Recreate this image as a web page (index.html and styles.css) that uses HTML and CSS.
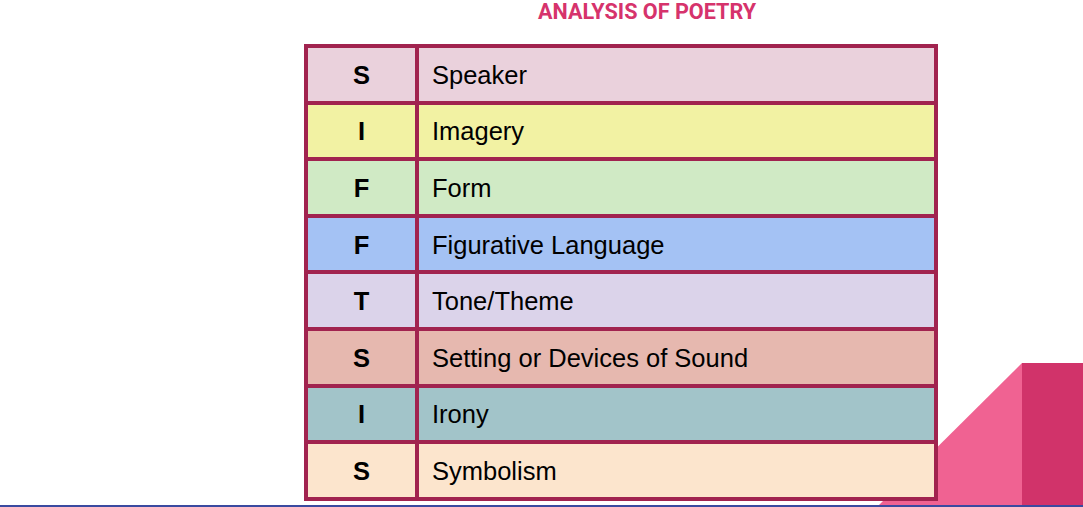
FILE: index.html
```html
<!DOCTYPE html>
<html>
<head>
<meta charset="utf-8">
<link rel="stylesheet" href="styles.css">
</head>
<body>
<div class="page">
  <h1 class="title">ANALYSIS OF POETRY</h1>
  <table class="sifft">
    <tr class="r1"><td class="letter">S</td><td class="term">Speaker</td></tr>
    <tr class="r2"><td class="letter">I</td><td class="term">Imagery</td></tr>
    <tr class="r3"><td class="letter">F</td><td class="term">Form</td></tr>
    <tr class="r4"><td class="letter">F</td><td class="term">Figurative Language</td></tr>
    <tr class="r5"><td class="letter">T</td><td class="term">Tone/Theme</td></tr>
    <tr class="r6"><td class="letter">S</td><td class="term">Setting or Devices of Sound</td></tr>
    <tr class="r7"><td class="letter">I</td><td class="term">Irony</td></tr>
    <tr class="r8"><td class="letter">S</td><td class="term">Symbolism</td></tr>
  </table>
  <svg class="deco" width="204" height="142" viewBox="0 0 204 142">
    <polygon points="0,142 143,0 204,0 204,142" fill="#f06292"/>
    <rect x="143" y="0" width="61" height="142" fill="#d1336a"/>
  </svg>
</div>
</body>
</html>
```

FILE: styles.css
```css
html, body {
  margin: 0;
  padding: 0;
  background: #ffffff;
}
.page {
  position: relative;
  width: 1083px;
  height: 505px;
  border-bottom: 2px solid #3a4aa0;
  overflow: hidden;
}
.title {
  margin: 0;
  padding: 0 0 0 538px;
  height: 44px;
  box-sizing: border-box;
  font-family: Roboto, "Liberation Sans", sans-serif;
  font-weight: 700;
  font-size: 21.6px;
  line-height: 24px;
  color: #d6336c;
}
.sifft {
  position: relative;
  z-index: 1;
  margin-left: 304px;
  border-collapse: collapse;
  border: 4px solid #a1234f;
  font-family: "Liberation Sans", Arial, sans-serif;
  font-size: 25.5px;
  color: #000;
}
.sifft td {
  border: 4px solid #a1234f;
  height: 50.6px;
  padding: 2px 0 0 0;
  box-sizing: content-box;
}
.sifft .letter {
  width: 107px;
  text-align: center;
  font-weight: 700;
}
.sifft .term {
  width: 502px;
  padding-left: 13px;
}
.r1 td { background: #ead1dc; }
.r2 td { background: #f2f2a3; }
.r3 td { background: #d0eac5; }
.r4 td { background: #a4c2f4; }
.r5 td { background: #dbd3ea; }
.r6 td { background: #e6b8af; }
.r7 td { background: #a2c4c9; }
.r8 td { background: #fce5cd; }
.deco {
  position: absolute;
  right: 0;
  bottom: 0;
  display: block;
}
```
